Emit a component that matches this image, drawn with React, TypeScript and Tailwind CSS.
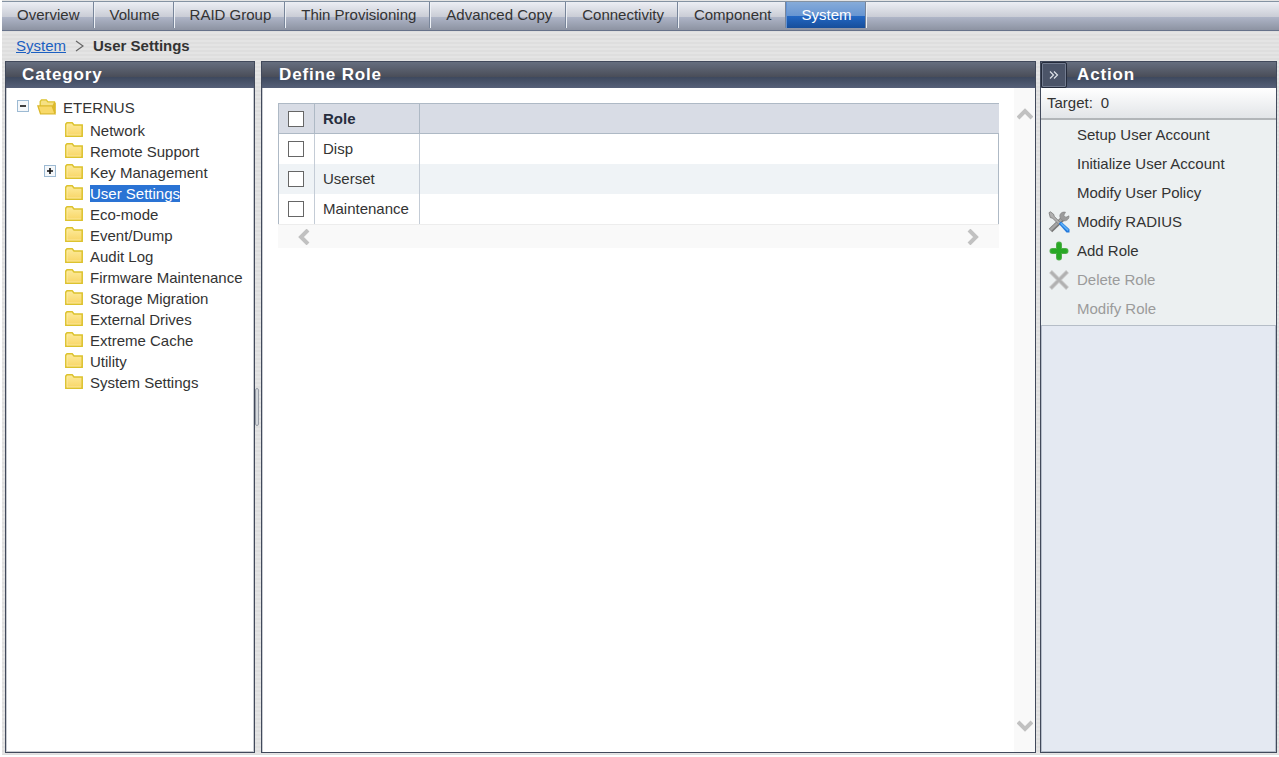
import React from 'react';
import clsx from 'clsx';

const tabs = [
  'Overview',
  'Volume',
  'RAID Group',
  'Thin Provisioning',
  'Advanced Copy',
  'Connectivity',
  'Component',
  'System',
];

const categories = [
  'Network',
  'Remote Support',
  'Key Management',
  'User Settings',
  'Eco-mode',
  'Event/Dump',
  'Audit Log',
  'Firmware Maintenance',
  'Storage Migration',
  'External Drives',
  'Extreme Cache',
  'Utility',
  'System Settings',
];

const roles = ['Disp', 'Userset', 'Maintenance'];

// Icons
const FolderIcon = () => (
  <svg width="18" height="18" viewBox="0 0 18 18" className="shrink-0" aria-hidden="true">
    <defs>
      <linearGradient id="folder" x1="0" y1="0" x2="0" y2="1">
        <stop offset="0" stopColor="#fdeb9c" />
        <stop offset="1" stopColor="#f8d565" />
      </linearGradient>
    </defs>
    <path d="M.8 14.3V2L2 .8h5.200l1.800 2.200h8.200v11.300z" fill="url(#folder)" stroke="#dcc22e" strokeWidth="1.500" />
    <path d="M2 13.500V2.800M2 13h14" stroke="#fff3b8" strokeWidth=".6" fill="none" />
  </svg>
);

const OpenFolderIcon = () => (
  <svg width="20" height="18" viewBox="0 0 20 18" className="shrink-0" aria-hidden="true">
    <path d="M3.200 9V2.500L4.500.9h4.800l1.600 2h6.600V9" fill="#f6e184" stroke="#dcc22e" strokeWidth="1.300" />
    <path d="M.9 6.900h14.200l3 7.900H3.500z" fill="#f8d969" stroke="#dcb92c" strokeWidth="1.300" />
    <path d="M15.200 7l2.600 7.800 1-.8V4l-1.300-1.200z" fill="#dcb92c" />
  </svg>
);

const ToolsIcon = () => (
  <svg width="22" height="22" viewBox="0 0 22 22" aria-hidden="true">
    <path d="M2.500 19.500L15 7.500" stroke="#777" strokeWidth="4.800" />
    <path d="M2.500 18.900L15 6.900" stroke="#a6a6a6" strokeWidth="2.600" />
    <path d="M17.500 1.200c-3.200-.7-6 1.200-5.700 4.400.3 2.900 2.800 4.800 5.600 4.200 2.400-.5 3.900-2.500 3.600-5L17.800 6.300l-2-2z" fill="#9b9b9b" stroke="#808080" strokeWidth=".6" />
    <path d="M1 1.700l1.400-.9 3.200 2.400.7 2.300 6.200 6.200-1.700 1.700-6.200-6.200-2.300-.6z" fill="#b0b0b0" stroke="#777" strokeWidth=".8" />
    <path d="M10.800 12.800l2.200-2.200 8.500 7.600v3.300h-3z" fill="#2379dc" />
    <path d="M12.800 12.200l7.400 7.200" stroke="#5cb0f8" strokeWidth="1.800" />
  </svg>
);

const PlusIcon = () => (
  <svg width="20" height="20" viewBox="0 0 20 20" aria-hidden="true">
    <path d="M10 3.500v13M3.500 10h13" stroke="#4fae49" strokeWidth="6" strokeLinecap="round" />
    <path d="M10 3.500v13M3.500 10h13" stroke="#28a825" strokeWidth="4" strokeLinecap="round" />
  </svg>
);

const CrossIcon = () => (
  <svg width="20" height="20" viewBox="0 0 20 20" aria-hidden="true">
    <path d="M1.500 1.500L18.500 18.500M18.500 1.500L1.500 18.500" stroke="#c4c4c4" strokeWidth="4" />
    <path d="M2 2L18 18M18 2L2 18" stroke="#b0b0b0" strokeWidth="2" />
  </svg>
);

interface ScrollButtonProps {
  points: string;
  label: string;
  className: string;
}

const ScrollButton: React.FC<ScrollButtonProps> = ({ points, label, className }) => (
  <button type="button" aria-label={label} className={clsx('flex items-center justify-center', className)}>
    <svg width="16" height="16" viewBox="0 0 16 16">
      <polyline points={points} fill="none" stroke="#c1c1c1" strokeWidth="4" />
    </svg>
  </button>
);

const actions: { label: string; icon?: React.ReactNode; disabled?: boolean }[] = [
  { label: 'Setup User Account' },
  { label: 'Initialize User Account' },
  { label: 'Modify User Policy' },
  { label: 'Modify RADIUS', icon: <ToolsIcon /> },
  { label: 'Add Role', icon: <PlusIcon /> },
  { label: 'Delete Role', icon: <CrossIcon />, disabled: true },
  { label: 'Modify Role', disabled: true },
];

const Expander: React.FC<{ open?: boolean; label: string }> = ({ open, label }) => (
  <button
    type="button"
    aria-label={label}
    className="mb-1 flex h-3 w-3 shrink-0 items-center justify-center border border-[#9dbad3] bg-[#f4f7fa]"
  >
    <svg width="8" height="8" viewBox="0 0 8 8">
      <path d={open ? 'M1 4h6' : 'M1 4h6M4 1v6'} stroke="#111" strokeWidth="1.600" />
    </svg>
  </button>
);

const headerClass =
  'flex h-[26px] shrink-0 items-center bg-[linear-gradient(#666e7f,#4a4e59_56%,#3d485d_57%,#566078)] text-[17px] font-bold tracking-wider text-white';

const Checkbox: React.FC<{ label: string }> = ({ label }) => (
  <input
    type="checkbox"
    aria-label={label}
    className="block h-4 w-4 appearance-none border border-[#666] bg-white checked:bg-[#2a70d0]"
  />
);

const TabBar = () => (
  <nav className="mt-px flex h-[30px] shrink-0 border-t border-b border-t-[#8492a2] border-b-[#66728a] bg-[linear-gradient(#eceef4,#c9ccd5_54%,#adb4c6_55%,#8d93a2)]">
    {tabs.map((tab) => (
      <button
        key={tab}
        type="button"
        className={clsx(
          'h-[26px] border-r border-l border-r-[#78859a] pr-[13px] pl-[15px] whitespace-nowrap first:border-l-0',
          tab === 'System'
            ? 'border-l-[#6191d3] bg-[linear-gradient(#86abd9,#6795d2_54%,#2367c3_55%,#174e9a)] text-white'
            : 'border-l-[#edf0f5]'
        )}
      >
        {tab}
      </button>
    ))}
    <div className="h-[26px] border-l border-[#edf0f5]" />
  </nav>
);

const CategoryPanel = () => (
  <aside className="flex w-[250px] shrink-0 flex-col border border-[#41495b] bg-white">
    <h2 className={clsx(headerClass, 'pl-4')}>Category</h2>
    <div className="flex-1 border-x border-b border-[#c9ccd1] pt-[9px]">
      <div className="flex h-[21px] items-center pl-2.5">
        <Expander open label="Collapse ETERNUS" />
        <span className="pr-1.5 pl-2">
          <OpenFolderIcon />
        </span>
        ETERNUS
      </div>
      <ul className="pt-0.5">
        {categories.map((name) => (
          <li key={name} className="flex h-[21px] items-center">
            <span className="flex w-[58px] shrink-0 pl-[37px]">
              {name === 'Key Management' && <Expander label="Expand Key Management" />}
            </span>
            <FolderIcon />
            <a
              href="#"
              className={clsx('ml-[7px] leading-[17px] whitespace-nowrap', name === 'User Settings' && 'bg-[#2a73d4] text-white')}
            >
              {name}
            </a>
          </li>
        ))}
      </ul>
    </div>
  </aside>
);

const RoleTable = () => (
  <div className="min-w-0 flex-1 px-[15px] pt-[15px]">
    <table className="w-full table-fixed border-separate border-spacing-0 border-l border-[#aeb9c5] text-left">
      <colgroup>
        <col className="w-9" />
        <col className="w-[105px]" />
        <col />
      </colgroup>
      <thead>
        <tr className="h-[31px] bg-[#d8dce5] text-[#272d3d]">
          <th className="border-y border-r border-[#aeb9c5] pl-[9px]">
            <Checkbox label="Select all roles" />
          </th>
          <th className="border-y border-r border-[#aeb9c5] pl-2">Role</th>
          <th className="border-y border-[#aeb9c5]" />
        </tr>
      </thead>
      <tbody>
        {roles.map((role) => (
          <tr key={role} className="h-[30px] even:bg-[#eff3f6]">
            <td className="border-r border-[#c4ccd6] pl-[9px]">
              <Checkbox label={role} />
            </td>
            <td className="border-r border-[#c4ccd6] pl-2">{role}</td>
            <td className="border-r border-[#aeb9c5]" />
          </tr>
        ))}
      </tbody>
    </table>
    <div className="flex h-[24px] justify-between border-t border-[#ededed] bg-[#f9f9f9] px-[18px]">
      <ScrollButton label="Scroll left" points="12,1 5,8 12,15" className="w-4" />
      <ScrollButton label="Scroll right" points="4,1 11,8 4,15" className="w-4" />
    </div>
  </div>
);

const RolePanel = () => (
  <main className="flex min-w-0 flex-1 flex-col border border-[#41495b] bg-white">
    <h2 className={clsx(headerClass, 'pl-[17px]')}>Define Role</h2>
    <div className="flex flex-1 border-l border-[#c9ccd1]">
      <RoleTable />
      <div className="flex w-[21px] shrink-0 flex-col justify-between bg-[#f9f9f9] py-[18px]">
        <ScrollButton label="Scroll up" points="1,12 8,5 15,12" className="h-4" />
        <ScrollButton label="Scroll down" points="1,4 8,11 15,4" className="h-4" />
      </div>
    </div>
  </main>
);

const ActionPanel = () => (
  <aside className="flex w-[237px] shrink-0 flex-col border border-[#41495b] bg-[#e4e9f2]">
    <div className={headerClass}>
      <button
        type="button"
        aria-label="Hide action panel"
        className="flex h-[26px] w-[26px] items-center justify-center rounded-xs border border-[#242b3b] bg-[#4b5468] inset-ring inset-ring-[#737c90]"
      >
        <svg width="10" height="8" viewBox="0 0 10 8">
          <path d="M1 .5L4.500 4 1 7.500M5 .5L8.500 4 5 7.500" fill="none" stroke="#dfe2e8" strokeWidth="1.200" />
        </svg>
      </button>
      <h2 className="pl-2.5">Action</h2>
    </div>
    <div className="flex h-8 items-center gap-2 border-b-2 border-[#b2b6b9] bg-linear-to-b from-white to-[#e2e5e8] pl-1.5">
      <span>Target:</span>
      <span>0</span>
    </div>
    <ul className="border-b border-[#b5bdc7] bg-[#ecf0f1] pb-0.5">
      {actions.map(({ label, icon, disabled }) => (
        <li key={label}>
          <button
            type="button"
            disabled={disabled}
            className="flex h-[29px] w-full items-center text-left disabled:text-[#9b9b9b]"
          >
            <span className="flex w-9 shrink-0 justify-center">{icon}</span>
            {label}
          </button>
        </li>
      ))}
    </ul>
    <div className="flex-1 border-x border-b border-[#b5bdc9]" />
  </aside>
);

const App: React.FC = () => {
  return (
    <div className="flex min-h-screen flex-col bg-white pb-0.5 pl-0.5 font-['Liberation_Sans',Arial,sans-serif] text-[15px] leading-5 text-[#333]">
      <div className="flex flex-1 flex-col bg-[repeating-linear-gradient(#e4e4e4_0px,#e4e4e4_2px,#dedede_2px,#dedede_4px)]">
        <TabBar />
        <div className="flex h-[30px] shrink-0 items-center gap-[9px] pl-3.5">
          <a href="#" className="text-[#1b5fc1] underline">
            System
          </a>
          <svg width="9" height="12" viewBox="0 0 9 12" aria-hidden="true">
            <path d="M1 1L8 6 1 11" fill="none" stroke="#666" strokeWidth="1.200" />
          </svg>
          <span className="font-bold">User Settings</span>
        </div>
        <div className="flex flex-1 pr-0.5 pb-0.5 pl-[3px]">
          <CategoryPanel />
          {/* Splitter between the tree and the role list */}
          <div className="flex w-1.5 shrink-0 items-center">
            <div className="h-[38px] w-1 rounded-sm border border-[#989da7] bg-[#d5d9dd]" />
          </div>
          <RolePanel />
          <div className="w-1 shrink-0" />
          <ActionPanel />
        </div>
      </div>
    </div>
  );
};

export default App;
